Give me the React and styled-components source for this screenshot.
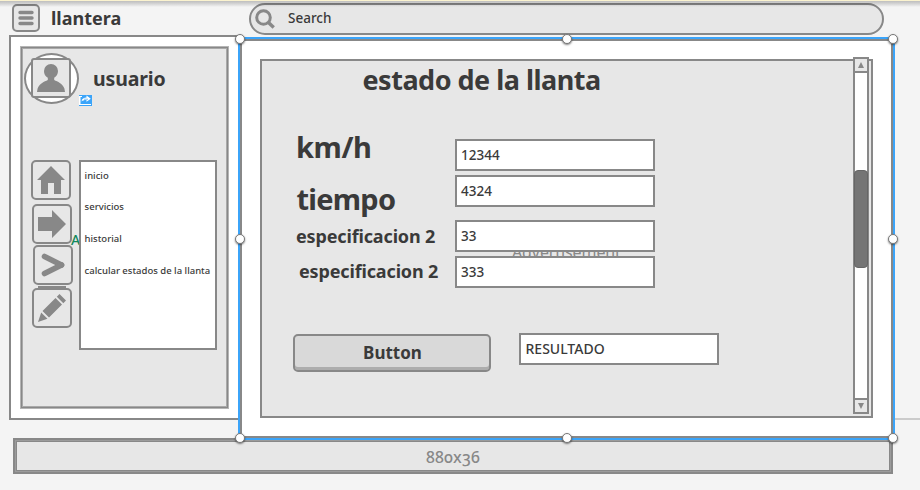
import React from 'react';
import styled, { createGlobalStyle } from 'styled-components';

const line = '#888888';
const ink = '#3a3a3a';
const fill = '#e7e7e7';

const GlobalStyle = createGlobalStyle`
  *, *::before, *::after { box-sizing: border-box; }
  body { margin: 0; background: #f4f4f4; overflow: hidden; }
`;

const Page = styled.div`
  position: relative;
  width: 920px;
  height: 490px;
  overflow: hidden;
  background: #f4f4f4;
  color: ${ink};
  font-family: "Noto Sans", sans-serif;
`;

const TopEdge = styled.div`
  position: absolute;
  inset: 0 0 auto 0;
  height: 7px;
  z-index: 2;
  background: linear-gradient(
    to bottom,
    #fbf3cf 0, #fbf3cf 1px,
    rgba(0, 0, 0, 0.22) 1px,
    rgba(0, 0, 0, 0.16) 3px,
    rgba(0, 0, 0, 0) 7px
  );
`;

const Text = styled.span`
  display: block;
  white-space: nowrap;
  font-size: ${p => p.$size}px;
  font-weight: ${p => p.$weight || 700};
  line-height: ${p => p.$line || 20}px;
  letter-spacing: ${p => p.$track || 0}px;
`;

const Header = styled.header`
  display: flex;
  align-items: flex-start;
  height: 35px;
  padding: 3px 0 0 12px;
`;

const Brand = styled.div`
  display: flex;
  align-items: flex-start;
  gap: 11px;
  width: 237px;
  padding-top: 1px;
`;

const BrandName = styled(Text)`
  padding-top: 4px;
`;

const IconFrame = styled.div`
  display: grid;
  place-items: center;
  flex: none;
  width: ${p => p.$size}px;
  height: ${p => p.$size}px;
  margin-left: ${p => p.$shift || 0}px;
  margin-bottom: ${p => p.$after || 0}px;
  border: 2px solid ${line};
  border-radius: ${p => p.$radius ?? 5}px;
  background: ${fill};
  color: ${line};

  svg { display: block; }
`;

const SearchBox = styled.div`
  display: flex;
  align-items: flex-start;
  width: 635px;
  height: 32px;
  padding: 3px 0 0 4px;
  gap: 13px;
  border: 2px solid ${line};
  border-radius: 16px;
  background: ${fill};
`;

const Body = styled.main`
  display: flex;
  align-items: flex-start;
  height: 403px;
  padding-left: 9px;
`;

const Sidebar = styled.aside`
  width: 231px;
  height: 385px;
  padding: 10px 0 0 10px;
  border: 2px solid ${line};
  border-right: 0;
  background: #fff;
`;

const SidebarCard = styled.div`
  width: 207px;
  height: 361px;
  border: 1px solid ${line};
  box-shadow: 0 0 0 1px #b5b5b5, inset 0 0 0 1px #a9a9a9;
  background: ${fill};
`;

const Profile = styled.div`
  position: relative;
  display: flex;
  gap: 14px;
  height: 112px;
  padding: 5px 0 0 2px;
`;

const Avatar = styled.div`
  display: flex;
  flex: none;
  padding: 3px 0 0 5px;
  width: 55px;
  height: 51px;
  border: 2px solid ${line};
  border-radius: 50%;
  background: #fff;
`;

const UserName = styled(Text)`
  padding-top: 16px;
`;

const LinkBadge = styled.svg`
  position: absolute;
  left: 57px;
  top: 47px;
`;

const Navigation = styled.div`
  display: flex;
  padding-left: 9px;
`;

const IconRail = styled.div`
  width: 48px;
`;

const RailDivider = styled.div`
  width: 28px;
  height: 2px;
  margin: 1px 0 0 7px;
  background: ${line};
`;

const MenuWrap = styled.div`
  position: relative;
`;

const Marker = styled(Text)`
  position: absolute;
  left: -8px;
  top: 70px;
  color: #12885a;
`;

const Menu = styled.nav`
  position: relative;
  display: grid;
  align-content: start;
  grid-auto-rows: 31.7px;
  width: 138px;
  height: 190px;
  padding: 3.6px 0 0 3.6px;
  border: 2px solid ${line};
  background: #fff;
`;

const Widget = styled.section`
  position: relative;
  z-index: 1;
  flex: none;
  width: 653px;
  height: 399px;
  margin-top: 4px;
  padding: 18px 0 0 18px;
  border: 2px solid ${line};
  background: #fff;
  box-shadow: 0 0 0 2px #3ba4f9;
`;

const Handle = styled.i`
  position: absolute;
  left: ${p => p.$x}px;
  top: ${p => p.$y}px;
  width: 10px;
  height: 10px;
  margin: -7px 0 0 -7px;
  border: 1px solid #777;
  border-radius: 50%;
  background: #fff;
  box-shadow: 0 1px 2px rgba(0, 0, 0, 0.5);
`;

const Panel = styled.div`
  position: relative;
  width: 613px;
  height: 359px;
  padding: 0 0 0 31px;
  border: 2px solid ${line};
  background: ${fill};
`;

const Title = styled(Text)`
  padding: 1px 0 1px 69.5px;
`;

const Form = styled.div`
  display: grid;
  grid-template-columns: 162px 200px;
  grid-template-rows: 36px 45px 36px 32px;
  margin-top: 40px;
`;

const FieldLabel = styled(Text)`
  margin-top: ${p => p.$top}px;
  margin-left: ${p => p.$left}px;
`;

const Field = styled.div`
  position: relative;
  width: 200px;
  height: 32px;
  padding: 4px 0 0 ${p => p.$inset || 4}px;
  border: 2px solid ${line};
  background: #fff;
`;

const Placeholder = styled(Text)`
  position: absolute;
  left: 250px;
  top: 179px;
  color: ${line};
`;

const Actions = styled.div`
  display: flex;
  gap: 28px;
  margin-top: 45px;
`;

const Button = styled.div`
  width: 198px;
  height: 38px;
  margin-top: 1px;
  padding: 7px 0 0 1px;
  border: 2px solid ${line};
  border-radius: 5px;
  background: #d9d9d9;
  box-shadow: inset 0 -3px 0 #adadad;
  text-align: center;
`;

const Scrollbar = styled.div`
  position: absolute;
  left: 591px;
  top: -4px;
  display: flex;
  flex-direction: column;
  justify-content: space-between;
  width: 16px;
  height: 357px;
  border: 2px solid ${line};
  background: #fff;
`;

const ScrollEnd = styled.div`
  display: grid;
  place-items: center;
  height: 14px;
  border-${p => (p.$down ? 'top' : 'bottom')}: 2px solid ${line};
  background: ${fill};

  svg { display: block; }
`;

const Thumb = styled.div`
  position: absolute;
  left: -1px;
  top: 111px;
  width: 14px;
  height: 98px;
  border: 1px solid #666;
  border-radius: 4px;
  background: #757575;
`;

const Rule = styled.div`
  flex: 1;
  height: 2px;
  margin-top: 383px;
  background: #cbcbcb;
`;

const Footer = styled.footer`
  width: 880px;
  height: 36px;
  margin-left: 13px;
  padding-top: 5px;
  border: 4px solid ${line};
  outline: 1px solid #9b9b9b;
  outline-offset: -3px;
  background: ${fill};
  color: ${line};
  text-align: center;
  font-variant-numeric: oldstyle-nums;
`;

const MenuIcon = () => (
  <svg width="16" height="16" viewBox="0 0 16 16" stroke="currentColor" strokeWidth="3.4" strokeLinecap="round">
    <path d="M2 2.5h12M2 8h12M2 13.5h12" />
  </svg>
);

const SearchIcon = () => (
  <svg width="20" height="22" viewBox="0 0 20 22" fill="none" stroke={line} strokeWidth="3">
    <circle cx="8.5" cy="9.5" r="6.8" />
    <path d="M13.2 14.2l5.5 5.3" strokeWidth="3.4" />
  </svg>
);

const UserIcon = () => (
  <svg width="28" height="28" viewBox="0 0 28 28" fill="currentColor">
    <path d="M14 0a7 7 0 0 1 7 7c0 3-1.4 5.3-3.8 6.8v2.1c3.5 1.8 8.2 3.1 10.2 8.6L28 28H0l.6-3.5c2-5.5 6.7-6.8 10.2-8.6v-2.100A7.800 7.800 0 0 1 7 7a7 7 0 0 1 7-7z" />
  </svg>
);

const HomeIcon = () => (
  <svg width="28" height="28" viewBox="0 0 28 28" fill="currentColor">
    <path d="M14 0l14 14h-4v14h-7V17h-6v11H4V14H0z" />
  </svg>
);

const ArrowIcon = () => (
  <svg width="28" height="28" viewBox="0 0 28 28" fill="currentColor">
    <path d="M0 7h14V0l14 14-14 14v-7H0z" />
  </svg>
);

const ChevronIcon = () => (
  <svg width="24" height="24" viewBox="0 0 24 24" fill="none" stroke="currentColor" strokeWidth="5.6" strokeLinecap="round">
    <path d="M3.500 3.500L20.500 12" />
    <path d="M3.500 20.500L20.500 12" />
  </svg>
);

const PencilIcon = () => (
  <svg width="28" height="28" viewBox="0 0 28 28" fill="currentColor">
    <path d="M0 28l3.200-9.500 6.300 6.300zM4.500 17L17.500 4l6.500 6.500-13 13zM18.800 2.700L21.500 0 28 6.500l-2.700 2.700z" />
  </svg>
);

const LinkIcon = () => (
  <LinkBadge width="13" height="11" viewBox="0 0 13 11">
    <path d="M0 0h13v11H0z" fill="#3ba4f9" />
    <path d="M0 1h3v1H1.500v7H12v1H0z" fill="#fff" />
    <path d="M2.500 6.500C2.800 3.500 5 2.500 7.500 2.500V.5l4.300 3.200-4.300 3V5C5.500 4.800 3.800 5.300 2.500 6.500z" fill="#fff" />
    <path d="M5 4.200h4" stroke="#3ba4f9" strokeWidth=".7" />
  </LinkBadge>
);

const Triangle = ({ down }) => (
  <svg width="6" height="6" viewBox="0 0 6 6" fill={line}>
    <path d={down ? 'M0 0h6L3 6z' : 'M3 0l3 6H0z'} />
  </svg>
);

const menuItems = ['inicio', 'servicios', 'historial', 'calcular estados de la llanta'];

const fields = [
  { label: 'km/h', value: '12344', size: 29, track: -0.4, top: -10, left: 3 },
  { label: 'tiempo', value: '4324', size: 29, track: -0.75, top: 6, left: 3.5 },
  { label: 'especificacion 2', value: '33', size: 18, track: -0.15, top: 6, left: 3 },
  { label: 'especificacion 2', value: '333', size: 18, track: -0.15, top: 5, left: 6 },
];

const handles = [
  [0, 0], [327, 0], [653, 0],
  [0, 200], [653, 200],
  [0, 399], [327, 399], [653, 399],
];

export default function App() {
  return (
    <Page>
      <GlobalStyle />
      <TopEdge />
      <Header>
        <Brand>
          <IconFrame $size={28}><MenuIcon /></IconFrame>
          <BrandName $size={18}>llantera</BrandName>
        </Brand>
        <SearchBox>
          <SearchIcon />
          <Text $size={13.5} $weight={500}>Search</Text>
        </SearchBox>
      </Header>
      <Body>
        <Sidebar>
          <SidebarCard>
            <Profile>
              <Avatar>
                <IconFrame $size={40} $radius={3}><UserIcon /></IconFrame>
              </Avatar>
              <UserName $size={19.5} $track={-0.15}>usuario</UserName>
              <LinkIcon />
            </Profile>
            <Navigation>
              <IconRail>
                <IconFrame $size={40} $after={4}><HomeIcon /></IconFrame>
                <IconFrame $size={40} $shift={1} $after={1}><ArrowIcon /></IconFrame>
                <IconFrame $size={40} $shift={2}><ChevronIcon /></IconFrame>
                <RailDivider />
                <IconFrame $size={40} $shift={1}><PencilIcon /></IconFrame>
              </IconRail>
              <MenuWrap>
                <Marker $size={14} $weight={500}>A</Marker>
                <Menu>
                  {menuItems.map(item => (
                    <Text key={item} $size={9.5} $weight={500}>{item}</Text>
                  ))}
                </Menu>
              </MenuWrap>
            </Navigation>
          </SidebarCard>
        </Sidebar>
        <Widget>
          <Panel>
            <Title $size={27} $line={36} $track={-0.5}>estado de la llanta</Title>
            <Placeholder $size={16} $weight={400} $track={-0.1} $line={24}>Advertisement</Placeholder>
            <Form>
              {fields.map(f => (
                <React.Fragment key={f.value}>
                  <FieldLabel $size={f.size} $track={f.track} $line={f.size === 29 ? 36 : 20} $top={f.top} $left={f.left}>
                    {f.label}
                  </FieldLabel>
                  <Field><Text $size={13.5} $weight={500}>{f.value}</Text></Field>
                </React.Fragment>
              ))}
            </Form>
            <Actions>
              <Button><Text $size={17}>Button</Text></Button>
              <Field $inset={4.5}><Text $size={14} $weight={500}>RESULTADO</Text></Field>
            </Actions>
            <Scrollbar>
              <ScrollEnd><Triangle /></ScrollEnd>
              <Thumb />
              <ScrollEnd $down><Triangle down /></ScrollEnd>
            </Scrollbar>
          </Panel>
          {handles.map(([x, y]) => <Handle key={`${x}-${y}`} $x={x} $y={y} />)}
        </Widget>
        <Rule />
      </Body>
      <Footer>
        <Text $size={16} $weight={500} $track={0.15}>880x36</Text>
      </Footer>
    </Page>
  );
}
